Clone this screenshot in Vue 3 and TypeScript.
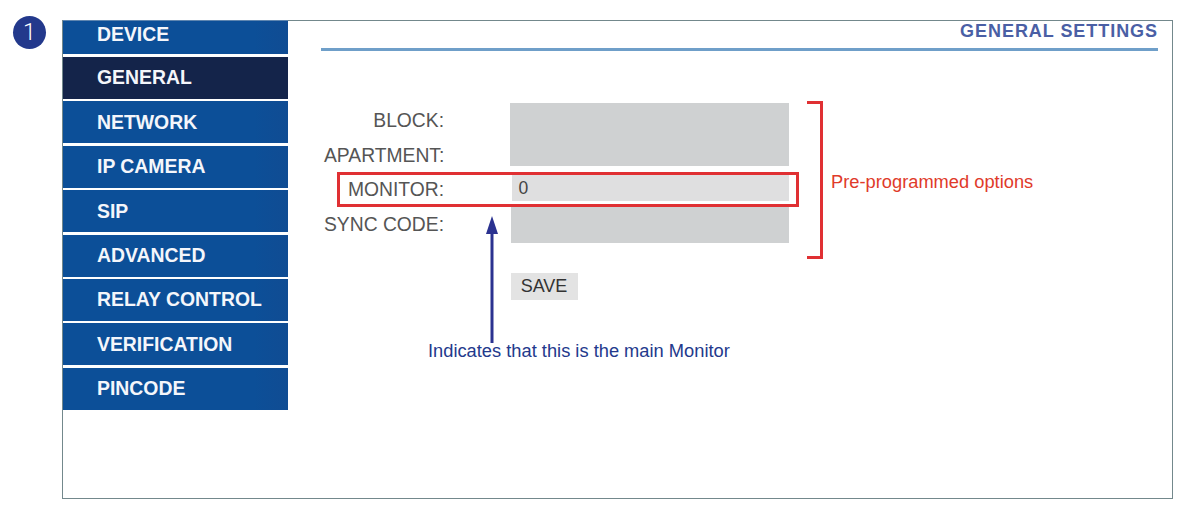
<script setup lang="ts">
const menu: string[] = ['DEVICE', 'GENERAL', 'NETWORK', 'IP CAMERA', 'SIP', 'ADVANCED', 'RELAY CONTROL', 'VERIFICATION', 'PINCODE']
</script>

<template>
  <div class="page">
    <div class="badge">1</div>
    <div class="frame">
      <nav class="menu">
        <div v-for="item in menu" :key="item" class="item" :class="{ active: item === 'GENERAL' }">{{ item }}</div>
      </nav>
      <main class="content">
        <h1 class="title">GENERAL SETTINGS</h1>
        <div class="form">
          <span class="label">BLOCK:</span>
          <div class="field tall"></div>
          <span class="label">APARTMENT:</span>
          <span class="label">MONITOR:</span>
          <div class="field monitor">0</div>
          <span class="label">SYNC CODE:</span>
          <div class="field sync"></div>
          <div class="save">SAVE</div>
        </div>
      </main>
    </div>

    <div class="red-box"></div>
    <div class="bracket"></div>
    <div class="note-red">Pre-programmed options</div>
    <svg class="arrow" width="14" height="128" viewBox="0 0 14 128">
      <path d="M7 0 L13 18 L1 18 Z" fill="#2b3290" />
      <path d="M7 16 V127" stroke="#2b3290" stroke-width="3" fill="none" />
    </svg>
    <div class="note-blue">Indicates that this is the main Monitor</div>
  </div>
</template>

<style>
body {
  margin: 0;
  background: #fff;
}
</style>

<style scoped>
.page {
  position: relative;
  width: 1184px;
  height: 517px;
  box-sizing: border-box;
  padding: 16px 0 0 13px;
  display: flex;
  align-items: flex-start;
  font-family: "Liberation Sans", Arial, sans-serif;
  overflow: hidden;
}
.badge {
  width: 33px;
  height: 33px;
  border-radius: 50%;
  background: #23398c;
  color: #fff;
  font-family: Roboto, "Liberation Sans", sans-serif;
  font-weight: 300;
  font-size: 23px;
  line-height: 33px;
  text-align: center;
  flex: none;
}
.frame {
  margin: 4px 0 0 16px;
  width: 1111px;
  height: 479px;
  box-sizing: border-box;
  border: 1px solid #73888c;
  display: flex;
  align-items: flex-start;
}
.menu {
  width: 225px;
  flex: none;
  margin: -1px 0 0 0;
  display: flex;
  flex-direction: column;
  gap: 2.4px;
}
.item {
  height: 42px;
  box-sizing: border-box;
  padding-left: 34px;
  display: flex;
  align-items: center;
  background: linear-gradient(90deg, #0c4f98 0%, #0c4f98 85%, #104c93 100%);
  color: #f4f6fb;
  font-size: 19.4px;
  font-weight: 700;
  white-space: nowrap;
}
.item:first-child {
  height: 34px;
  border-top: 1px solid #5f86b0;
  padding-bottom: 6px;
  margin-bottom: 0.6px;
}
.item.active {
  background: #14244a;
}
.content {
  flex: 1;
  padding-right: 14px;
  padding-left: 33px;
}
.title {
  margin: 0;
  height: 27px;
  border-bottom: 3px solid #6f9fc9;
  text-align: right;
  color: #4a5fa5;
  font-size: 18px;
  line-height: 20px;
  font-weight: 700;
  letter-spacing: 0.95px;
}
.form {
  margin: 52px 0 0 3px;
  display: grid;
  grid-template-columns: 120px 345px;
  grid-template-rows: repeat(4, 34.7px);
  column-gap: 65.5px;
}
.label {
  grid-column: 1;
  text-align: right;
  align-self: center;
  color: #555;
  font-size: 19.3px;
  line-height: 23px;
  white-space: nowrap;
}
.field {
  grid-column: 2;
  background: #cfd1d2;
}
.tall {
  grid-row: 1 / span 2;
  width: 279px;
  height: 63px;
}
.monitor {
  grid-row: 3;
  width: 277px;
  height: 26px;
  margin: 3px 0 0 2px;
  box-sizing: border-box;
  padding-left: 7px;
  background: #dfdfe0;
  color: #444;
  font-size: 17.5px;
  line-height: 26px;
}
.sync {
  grid-row: 4;
  width: 278px;
  height: 37px;
  margin: -1px 0 0 1px;
}
.save {
  grid-column: 2;
  grid-row: 5;
  width: 67px;
  height: 27px;
  margin: 31px 0 0 1px;
  background: #e3e3e3;
  color: #333;
  font-size: 18px;
  line-height: 27px;
  text-align: center;
}
.red-box {
  position: absolute;
  left: 337px;
  top: 172px;
  width: 462px;
  height: 35px;
  box-sizing: border-box;
  border: 3px solid #e03033;
}
.bracket {
  position: absolute;
  left: 807px;
  top: 101px;
  width: 16px;
  height: 158px;
  box-sizing: border-box;
  border: 3px solid #e03033;
  border-left: 0;
}
.note-red {
  position: absolute;
  left: 831px;
  top: 172px;
  color: #e03a2a;
  font-size: 18.3px;
  line-height: 20px;
  white-space: nowrap;
}
.arrow {
  position: absolute;
  left: 485px;
  top: 216px;
}
.note-blue {
  position: absolute;
  left: 428px;
  top: 341px;
  color: #23398c;
  font-size: 18.3px;
  line-height: 20px;
  white-space: nowrap;
}
</style>
